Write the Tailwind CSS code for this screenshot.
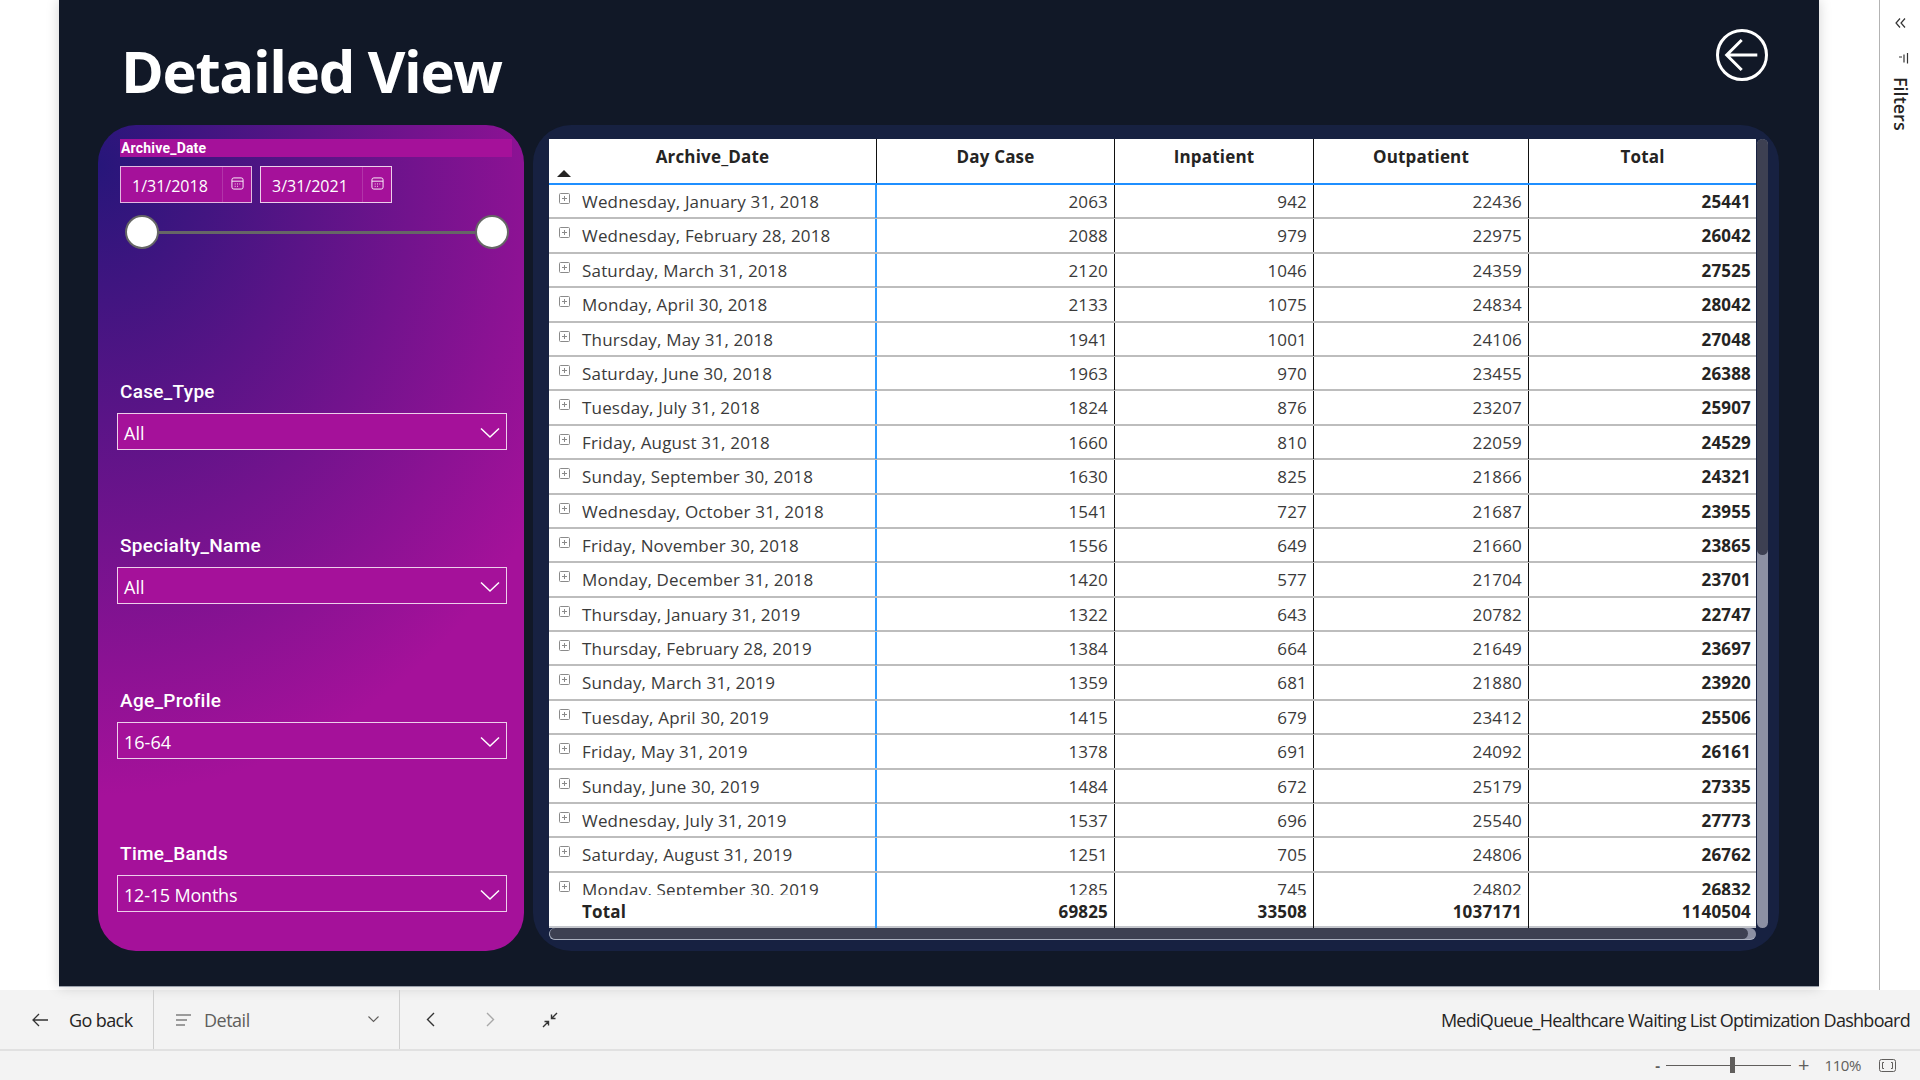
<!DOCTYPE html>
<html lang="en">

<head>
    <meta charset="UTF-8">
    <title>Detailed View</title>
    <script src="https://cdn.jsdelivr.net/npm/@tailwindcss/browser@4"></script>
</head>

<body class="w-[1920px] h-[1080px] overflow-hidden bg-white font-['Open_Sans',sans-serif] text-[#252423]">
    <div class="flex h-[990px]">
        <!-- report canvas -->
        <main class="ml-[59px] w-[1760px] h-[987px] bg-[#111827] shadow-[0_0_12px_rgba(0,0,0,0.18)] border-b border-[#9aa0ab]">
            <header class="flex justify-between h-[125px] pl-[62px] pr-[51px]">
                <h1 class="mt-[31px] text-[58px] leading-[80px] font-bold tracking-[-1.35px] text-white">Detailed View</h1>
                <svg class="mt-[29px]" width="52" height="52" viewBox="0 0 52 52" fill="none" stroke="white" stroke-width="3">
                    <circle cx="26" cy="26" r="24.5" />
                    <path d="M41.3 26H11M25.7 11L10.7 26L25.7 41" />
                </svg>
            </header>

            <div class="flex pl-[39px] gap-[9px]">
                <!-- slicers -->
                <aside class="w-[426px] h-[826px] pt-[14px] rounded-[38px] bg-[radial-gradient(ellipse_530px_630px_at_0px_40px,#27167a_0%,#a5119a_100%)] font-['Roboto',sans-serif] text-white">
                    <div class="ml-[22px] h-[18px] w-[392px] flex items-center bg-[#a5119a] text-[14px] tracking-[0.2px] font-bold leading-none pl-px">Archive_Date</div>
                    <div class="flex gap-[8px] ml-[22px] mt-[9px]">
                        <div class="w-[132px] h-[37px] flex items-center justify-between pl-[11px] border border-white/70 bg-[#a5119a] text-[16px] font-['Open_Sans',sans-serif]">
                            <span class="pt-[2px]">1/31/2018</span>
                            <div class="flex items-center justify-center w-[29px] h-full border-l border-white/15">
                                <svg class="-mt-[2px]" width="13" height="13" viewBox="0 0 14 14" fill="none" stroke="white" stroke-width="1"><rect x="1" y="1" width="12" height="12" rx="2" /><path d="M1 4.5H13M4 7.5H5M6.5 7.5H7.5M9 7.5H10M4 10H5M6.5 10H7.5" /></svg>
                            </div>
                        </div>
                        <div class="w-[132px] h-[37px] flex items-center justify-between pl-[11px] border border-white/80 bg-[#a5119a] text-[16px] font-['Open_Sans',sans-serif]">
                            <span class="pt-[2px]">3/31/2021</span>
                            <div class="flex items-center justify-center w-[29px] h-full border-l border-white/15">
                                <svg class="-mt-[2px]" width="13" height="13" viewBox="0 0 14 14" fill="none" stroke="white" stroke-width="1"><rect x="1" y="1" width="12" height="12" rx="2" /><path d="M1 4.5H13M4 7.5H5M6.5 7.5H7.5M9 7.5H10M4 10H5M6.5 10H7.5" /></svg>
                            </div>
                        </div>
                    </div>
                    <div class="flex items-center mt-[12px] ml-[27px] w-[384px] h-[34px]">
                        <span class="w-[34px] h-[34px] rounded-full bg-white border-2 border-[#666] shrink-0"></span>
                        <span class="flex-1 h-[3px] bg-[#666]"></span>
                        <span class="w-[34px] h-[34px] rounded-full bg-white border-2 border-[#666] shrink-0"></span>
                    </div>

                    <div class="ml-[19px] mt-[130px] w-[390px]">
                        <div class="pl-[3px] h-[26px] text-[19px] font-medium leading-[26px] tracking-[0.3px]">Case_Type</div>
                        <div class="mt-[8px] h-[37px] flex items-center justify-between pt-[3px] pl-[6px] pr-[6px] border border-white/80 bg-[#a5119a] text-[18px] font-['Open_Sans',sans-serif]">
                            All
                            <svg width="20" height="12" viewBox="0 0 20 12" fill="none" stroke="white" stroke-width="1.5"><path d="M1 1.5L10 10L19 1.5" /></svg>
                        </div>
                    </div>
                    <div class="ml-[19px] mt-[83px] w-[390px]">
                        <div class="pl-[3px] h-[26px] text-[19px] font-medium leading-[26px] tracking-[0.3px]">Specialty_Name</div>
                        <div class="mt-[8px] h-[37px] flex items-center justify-between pt-[3px] pl-[6px] pr-[6px] border border-white/80 bg-[#a5119a] text-[18px] font-['Open_Sans',sans-serif]">
                            All
                            <svg width="20" height="12" viewBox="0 0 20 12" fill="none" stroke="white" stroke-width="1.5"><path d="M1 1.5L10 10L19 1.5" /></svg>
                        </div>
                    </div>
                    <div class="ml-[19px] mt-[84px] w-[390px]">
                        <div class="pl-[3px] h-[26px] text-[19px] font-medium leading-[26px] tracking-[0.3px]">Age_Profile</div>
                        <div class="mt-[8px] h-[37px] flex items-center justify-between pt-[3px] pl-[6px] pr-[6px] border border-white/80 bg-[#a5119a] text-[18px] font-['Open_Sans',sans-serif]">
                            16-64
                            <svg width="20" height="12" viewBox="0 0 20 12" fill="none" stroke="white" stroke-width="1.5"><path d="M1 1.5L10 10L19 1.5" /></svg>
                        </div>
                    </div>
                    <div class="ml-[19px] mt-[82px] w-[390px]">
                        <div class="pl-[3px] h-[26px] text-[19px] font-medium leading-[26px] tracking-[0.3px]">Time_Bands</div>
                        <div class="mt-[8px] h-[37px] flex items-center justify-between pt-[3px] pl-[6px] pr-[6px] border border-white/80 bg-[#a5119a] text-[18px] tracking-[-0.2px] font-['Open_Sans',sans-serif]">
                            12-15 Months
                            <svg width="20" height="12" viewBox="0 0 20 12" fill="none" stroke="white" stroke-width="1.5"><path d="M1 1.5L10 10L19 1.5" /></svg>
                        </div>
                    </div>
                </aside>

                <!-- table visual -->
                <section class="w-[1246px] h-[826px] rounded-[38px] bg-[#172141] pl-[16px] pt-[14px]">
                    <div class="flex">
                        <div class="w-[1207px]">
                            <div class="bg-white h-[789px] flex flex-col text-[17px] tracking-[0.18px]">
                                <div class="grid grid-cols-[328px_238px_199px_215px_227px] h-[46px] border-b-2 border-[#1f8fff] font-bold shrink-0">
                                    <div class="relative border-r border-[#111] text-center pt-[5px]">Archive_Date
                                        <svg class="absolute left-[8px] bottom-[6px]" width="14" height="7" viewBox="0 0 14 7" fill="#252423"><path d="M7 0L14 7H0Z" /></svg>
                                    </div>
                                    <div class="border-r border-[#111] text-center pt-[5px]">Day Case</div>
                                    <div class="border-r border-[#111] text-center pt-[5px]">Inpatient</div>
                                    <div class="border-r border-[#111] text-center pt-[5px]">Outpatient</div>
                                    <div class="text-center pt-[5px]">Total</div>
                                </div>
                                <div id="rows" class="h-[710px] overflow-hidden shrink-0"></div>
                                <div class="grid grid-cols-[328px_238px_199px_215px_227px] h-[33px] font-bold leading-[33px] border-b-2 border-[#c4c6cc]">
                                    <div class="border-r-2 border-[#2f9bff] pl-[33px]">Total</div>
                                    <div class="border-r border-[#111] text-right pr-[6px]">69825</div>
                                    <div class="border-r border-[#111] text-right pr-[6px]">33508</div>
                                    <div class="border-r border-[#111] text-right pr-[6px]">1037171</div>
                                    <div class="text-right pr-[5px]">1140504</div>
                                </div>
                            </div>
                            <div class="h-[12px] rounded-full bg-[#8c90a3] border-b border-l border-[#aab0bf]">
                                <div class="h-full w-[1198px] rounded-full bg-[#3d4052]"></div>
                            </div>
                        </div>
                        <div class="ml-px w-[11px] h-[789px] rounded-full bg-[#8c90a3]">
                            <div class="h-[416px] rounded-full bg-[#3d4052]"></div>
                        </div>
                    </div>
                </section>
            </div>
        </main>

        <!-- filters pane -->
        <aside class="ml-[60px] w-[41px] h-[990px] border-l border-[#b3b3b3] flex flex-col items-center text-[#252423]">
            <svg class="mt-[18px]" width="11" height="10" viewBox="0 0 11 10" fill="none" stroke="#333" stroke-width="1.2"><path d="M5 0.5L1 5L5 9.5M10 0.5L6 5L10 9.5" /></svg>
            <svg class="mt-[25px] ml-[6px]" width="11" height="11" viewBox="0 0 11 11" fill="none" stroke="#333" stroke-width="1.2"><path d="M1 4H4M6 1.5V9.5M9.5 0V10.5" /></svg>
            <div class="mt-[13px] ml-[1px] text-[18px] font-semibold leading-none [writing-mode:vertical-rl]">Filters</div>
        </aside>
    </div>

    <!-- bottom navigation -->
    <footer class="h-[90px] bg-[#f3f3f3]">
        <nav class="flex items-center h-[61px] pt-[2px] border-b-2 border-[#e1e1e1] text-[18px]">
            <div class="flex items-center h-[59px] -mt-[2px] w-[154px] border-r border-[#cfcfcf] pl-[32px] gap-[21px]">
                <svg width="16" height="14" viewBox="0 0 16 14" fill="none" stroke="#333" stroke-width="1.3"><path d="M16 7H1M7 1L1 7L7 13" /></svg>
                <span class="tracking-[-0.6px] pt-[2px]">Go back</span>
            </div>
            <div class="flex items-center h-[59px] -mt-[2px] w-[246px] border-r border-[#cfcfcf] pl-[22px] pr-[20px] text-[#605e5c]">
                <svg width="15" height="12" viewBox="0 0 15 12" fill="none" stroke="#444" stroke-width="1.2"><path d="M0 1H15M0 6H11M0 11H9" /></svg>
                <span class="ml-[13px] tracking-[-0.5px] pt-[2px]">Detail</span>
                <svg class="ml-auto" width="11" height="7" viewBox="0 0 11 7" fill="none" stroke="#605e5c" stroke-width="1.1"><path d="M0.5 0.5L5.5 5.5L10.5 0.5" /></svg>
            </div>
            <svg class="ml-[26px] -mt-[2px]" width="9" height="15" viewBox="0 0 9 15" fill="none" stroke="#333" stroke-width="1.4"><path d="M8 1L1.5 7.5L8 14" /></svg>
            <svg class="ml-[51px] -mt-[2px]" width="9" height="15" viewBox="0 0 9 15" fill="none" stroke="#a8a8a8" stroke-width="1.4"><path d="M1 1L7.5 7.5L1 14" /></svg>
            <svg class="ml-[47px] -mt-[2px]" width="16" height="16" viewBox="0 0 16 16" fill="none" stroke="#333" stroke-width="1.4"><path d="M15 1L9.5 6.5M9.5 2.5V6.5H13.5M1 15L6.5 9.5M2.5 9.5H6.5V13.5" /></svg>
            <span class="ml-auto pr-[10px] tracking-[-0.72px]">MediQueue_Healthcare Waiting List Optimization Dashboard</span>
        </nav>
        <div class="flex items-center justify-end h-[28px] pr-[24px] text-[#605e5c] text-[15px]">
            <span class="font-bold mr-[6px]">-</span>
            <div class="relative w-[125px] h-px bg-[#605e5c]">
                <span class="absolute left-[64px] top-[-8px] w-[5px] h-[16px] bg-[#605e5c]"></span>
            </div>
            <span class="ml-[7px] text-[20px] leading-none">+</span>
            <span class="ml-[15px] tracking-[-0.4px]">110%</span>
            <svg class="ml-[18px]" width="17" height="13" viewBox="0 0 17 13" fill="none" stroke="#605e5c" stroke-width="1"><rect x="0.5" y="0.5" width="16" height="12" rx="2" /><path d="M5 3.5H3.5V9.5H5M12 3.5H13.5V9.5H12" /></svg>
        </div>
    </footer>

    <script>
        const data = [
            ['Wednesday, January 31, 2018', 2063, 942, 22436, 25441],
            ['Wednesday, February 28, 2018', 2088, 979, 22975, 26042],
            ['Saturday, March 31, 2018', 2120, 1046, 24359, 27525],
            ['Monday, April 30, 2018', 2133, 1075, 24834, 28042],
            ['Thursday, May 31, 2018', 1941, 1001, 24106, 27048],
            ['Saturday, June 30, 2018', 1963, 970, 23455, 26388],
            ['Tuesday, July 31, 2018', 1824, 876, 23207, 25907],
            ['Friday, August 31, 2018', 1660, 810, 22059, 24529],
            ['Sunday, September 30, 2018', 1630, 825, 21866, 24321],
            ['Wednesday, October 31, 2018', 1541, 727, 21687, 23955],
            ['Friday, November 30, 2018', 1556, 649, 21660, 23865],
            ['Monday, December 31, 2018', 1420, 577, 21704, 23701],
            ['Thursday, January 31, 2019', 1322, 643, 20782, 22747],
            ['Thursday, February 28, 2019', 1384, 664, 21649, 23697],
            ['Sunday, March 31, 2019', 1359, 681, 21880, 23920],
            ['Tuesday, April 30, 2019', 1415, 679, 23412, 25506],
            ['Friday, May 31, 2019', 1378, 691, 24092, 26161],
            ['Sunday, June 30, 2019', 1484, 672, 25179, 27335],
            ['Wednesday, July 31, 2019', 1537, 696, 25540, 27773],
            ['Saturday, August 31, 2019', 1251, 705, 24806, 26762],
            ['Monday, September 30, 2019', 1285, 745, 24802, 26832]
        ];
        const rows = document.getElementById('rows');
        data.forEach(d => {
            const row = document.createElement('div');
            row.className = 'grid grid-cols-[328px_238px_199px_215px_227px] h-[34.4px] border-b-2 border-[#bdbdbd] leading-[33px] text-[#3a3a3a]';
            row.innerHTML = `
                <div class="relative border-r-2 border-[#2f9bff] pl-[33px] whitespace-nowrap">
                    <svg class="absolute left-[10px] top-[8px]" width="11" height="11" viewBox="0 0 11 11" fill="none" stroke="#8a8a8a"><rect x="0.5" y="0.5" width="10" height="10" rx="1" /><path d="M3 5.5H8M5.5 3V8" /></svg>
                    ${d[0]}
                </div>
                <div class="border-r border-[#111] text-right pr-[6px]">${d[1]}</div>
                <div class="border-r border-[#111] text-right pr-[6px]">${d[2]}</div>
                <div class="border-r border-[#111] text-right pr-[6px]">${d[3]}</div>
                <div class="text-right pr-[5px] font-bold text-[#252423]">${d[4]}</div>`;
            rows.appendChild(row);
        });
    </script>
</body>

</html>
